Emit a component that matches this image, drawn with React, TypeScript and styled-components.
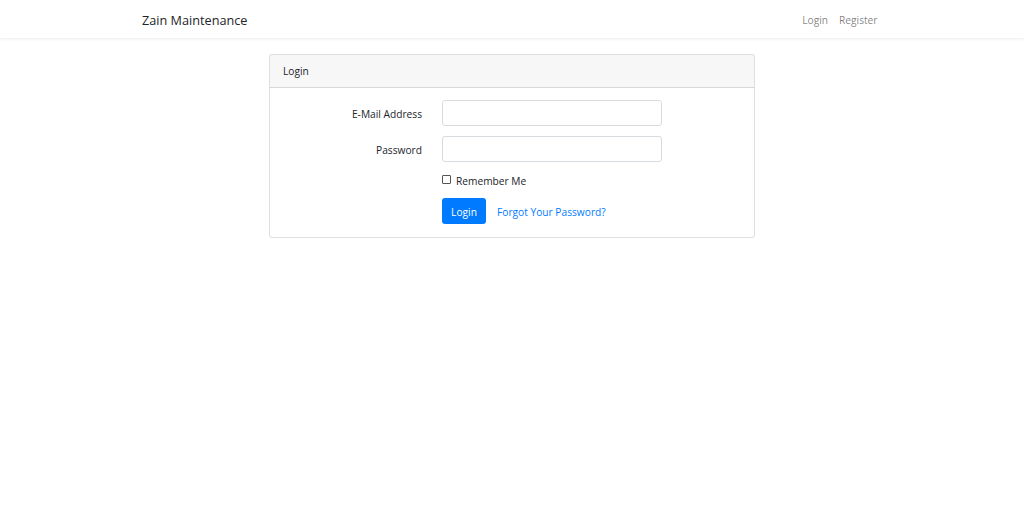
import React from "react";
import styled, { createGlobalStyle } from "styled-components";

const GlobalStyle = createGlobalStyle`
  html, body {
    margin: 0;
    padding: 0;
    background: #ffffff;
  }
  body {
    font-family: "Open Sans", "Noto Sans", sans-serif;
    font-size: 10px;
    color: #212529;
  }
  * {
    box-sizing: border-box;
  }
`;

const Navbar = styled.nav`
  height: 38px;
  background: #ffffff;
  box-shadow: 0 1px 3px rgba(0, 0, 0, 0.08);
  display: flex;
  justify-content: center;
`;

const NavContainer = styled.div`
  width: 740px;
  display: flex;
  align-items: center;
  justify-content: space-between;
  padding-top: 2px;
`;

const Brand = styled.a`
  font-size: 12.7px;
  color: #212529;
  text-decoration: none;
`;

const NavLinks = styled.div`
  display: flex;
  margin-right: -1px;
`;

const NavLink = styled.a`
  font-size: 10.2px;
  color: rgba(0, 0, 0, 0.5);
  text-decoration: none;
  padding: 0 5.5px;
`;

const Main = styled.main`
  padding-top: 16px;
  display: flex;
  justify-content: center;
`;

const Card = styled.div`
  width: 486px;
  border: 1px solid rgba(0, 0, 0, 0.125);
  border-radius: 3px;
  background: #ffffff;
`;

const CardHeader = styled.div`
  height: 33px;
  display: flex;
  align-items: center;
  padding: 0 13px;
  background: rgba(0, 0, 0, 0.03);
  border-bottom: 1px solid rgba(0, 0, 0, 0.125);
  font-size: 10.2px;
`;

const CardBody = styled.div`
  padding: 12px 12px 13px;
  display: flex;
  flex-direction: column;
  gap: 10px;
`;

const FormRow = styled.div`
  display: grid;
  grid-template-columns: 140px 220px;
  column-gap: 20px;
  align-items: center;
`;

const Label = styled.label`
  text-align: right;
  font-size: 10.2px;
  padding-top: 2px;
`;

const Input = styled.input`
  height: 26px;
  width: 220px;
  border: 1px solid #d6dbe0;
  border-radius: 3px;
  background: #ffffff;
  outline: none;
`;

const CheckLine = styled.label`
  grid-column: 2;
  display: flex;
  align-items: center;
  gap: 5px;
  font-size: 10.2px;
  height: 16px;
  padding-top: 2px;
`;

const CheckBox = styled.span`
  width: 9px;
  height: 9px;
  border: 1px solid #555;
  border-radius: 1px;
  background: #fff;
  margin-top: -4px;
`;

const Actions = styled.div`
  grid-column: 2;
  display: flex;
  align-items: center;
  gap: 11px;
`;

const Button = styled.button`
  height: 26px;
  width: 44px;
  padding: 1px 0 0;
  border: none;
  border-radius: 3px;
  background: #007bff;
  color: #ffffff;
  font-family: inherit;
  font-size: 10.2px;
`;

const Link = styled.a`
  color: #007bff;
  font-size: 10.2px;
  text-decoration: none;
  padding-top: 2px;
`;

export default function App() {
  return (
    <>
      <GlobalStyle />
      <Navbar>
        <NavContainer>
          <Brand href="#">Zain Maintenance</Brand>
          <NavLinks>
            <NavLink href="#">Login</NavLink>
            <NavLink href="#">Register</NavLink>
          </NavLinks>
        </NavContainer>
      </Navbar>
      <Main>
        <Card>
          <CardHeader>Login</CardHeader>
          <CardBody>
            <FormRow>
              <Label>E-Mail Address</Label>
              <Input type="email" />
            </FormRow>
            <FormRow>
              <Label>Password</Label>
              <Input type="password" />
            </FormRow>
            <FormRow>
              <CheckLine>
                <CheckBox />
                Remember Me
              </CheckLine>
            </FormRow>
            <FormRow>
              <Actions>
                <Button>Login</Button>
                <Link href="#">Forgot Your Password?</Link>
              </Actions>
            </FormRow>
          </CardBody>
        </Card>
      </Main>
    </>
  );
}
